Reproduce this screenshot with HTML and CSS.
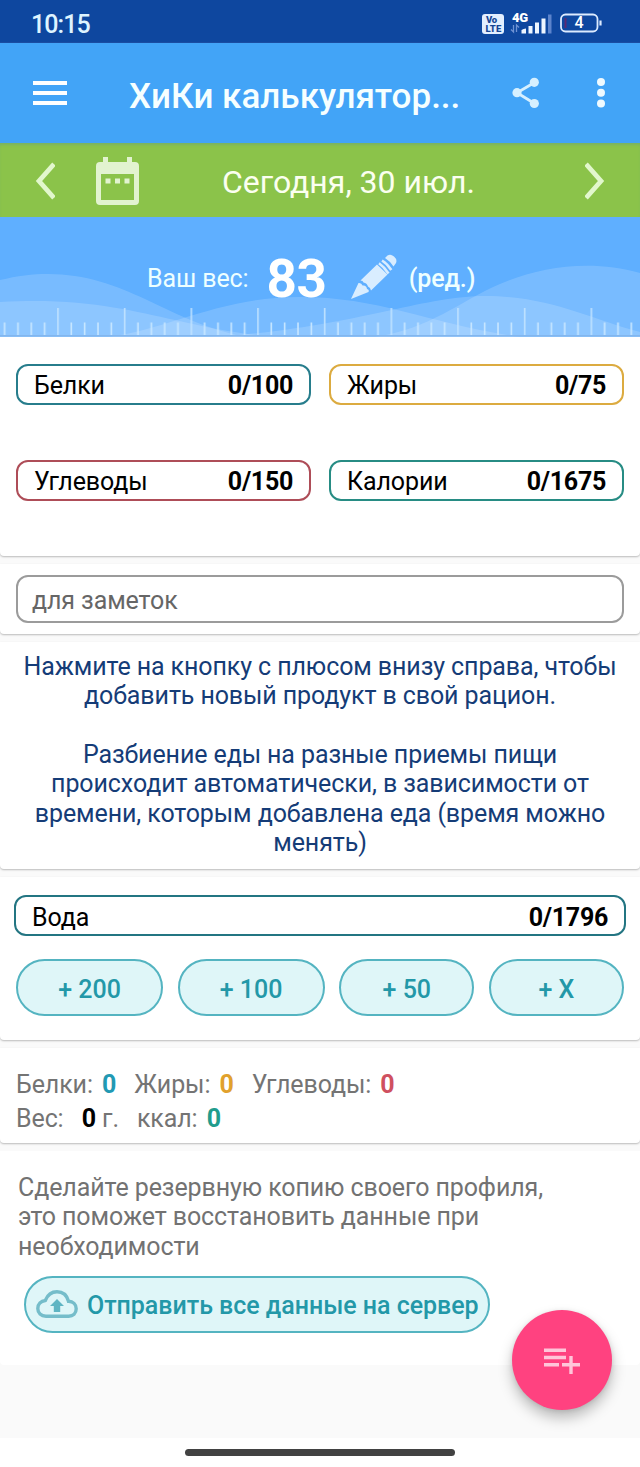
FILE: index.html
```html
<!DOCTYPE html>
<html lang="ru">
<head>
<meta charset="utf-8">
<title>ХиКи калькулятор</title>
<link rel="stylesheet" href="styles.css">
</head>
<body>
<header class="status">
  <span class="clock">10:15</span>
  <svg class="status-icons" width="122" height="26" viewBox="0 0 122 26">
    <rect x="0" y="3" width="22" height="20" rx="3" fill="#e3efff"/>
    <text x="4" y="12.400" class="volte" textLength="11">Vo</text>
    <text x="3.400" y="21" class="volte" textLength="16">LTE</text>
    <text x="30" y="11" class="net" textLength="16">4G</text>
    <path d="M31.500 14v7l-2.500-2.500M34.500 21v-7l2.500 2.500" stroke="#6f93d4" stroke-width="1.300" fill="none"/>
    <path d="M39.500 22.500V19q2-1.500 4.500-1.500v5zM46.500 22.500V15h4v7.500zM53 22.500V11.500h4v11zM59.500 22.500V7.500h4v15z" fill="#eef6ff"/>
    <path d="M66 22.500V3.500h3.500v19z" fill="#5c84cc"/>
    <rect x="79" y="3.500" width="36.500" height="17" rx="4.500" fill="none" stroke="#dcebff" stroke-width="1.800"/>
    <path d="M83.500 7v10" stroke="#5b2a72" stroke-width="2"/>
    <path d="M118.500 9.500v5" stroke="#dcebff" stroke-width="2.200"/>
    <text x="92.500" y="17.300" class="batt">4</text>
  </svg>
</header>
<nav class="toolbar">
  <svg class="menu" width="34" height="24" viewBox="0 0 34 24"><path d="M0 2h34M0 12h34M0 22h34" stroke="#fff" stroke-width="3.800"/></svg>
  <h1 class="title">ХиКи калькулятор...</h1>
  <svg class="share" width="28" height="32" viewBox="0 0 28 32"><path d="M22.500 5.500L5 15.700l17.500 10.800" stroke="#d6f0ff" stroke-width="2.800" fill="none"/><g fill="#d6f0ff"><circle cx="22.300" cy="5.300" r="4.600"/><circle cx="5" cy="15.700" r="4.600"/><circle cx="22.300" cy="26.500" r="4.600"/></g></svg>
  <svg class="dots" width="10" height="32" viewBox="0 0 10 32"><g fill="#effaff"><circle cx="5" cy="5" r="4"/><circle cx="5" cy="15.800" r="4"/><circle cx="5" cy="26.500" r="4"/></g></svg>
</nav>
<section class="daybar">
  <svg class="prev" width="20" height="38" viewBox="0 0 20 38"><path d="M19 2L4 19l15 17" fill="none" stroke="#e2f7cd" stroke-width="4.800"/></svg>
  <svg class="calendar" width="43" height="48" viewBox="0 0 43 48"><path fill="#e2f3d0" fill-rule="evenodd" d="M7 0h5v5h19V0h5v5h3a4 4 0 0 1 4 4v35a4 4 0 0 1-4 4H4a4 4 0 0 1-4-4V9a4 4 0 0 1 4-4h3zM5 17v26h33V17zM9.500 21.500h5v5h-5zm9.500 0h5v5h-5zm9.500 0h5v5h-5z"/></svg>
  <span class="date">Сегодня, 30 июл.</span>
  <svg class="next" width="20" height="38" viewBox="0 0 20 38"><path d="M1 2l15 17L1 36" fill="none" stroke="#e2f7cd" stroke-width="4.800"/></svg>
</section>
<section class="weight">
  <svg class="waves" width="640" height="120" viewBox="0 0 640 120">
    <defs>
      <pattern id="ruler" x="51.200" y="0" width="66.670" height="120" patternUnits="userSpaceOnUse">
        <path d="M6.800 91v27" stroke="#c3e4ff" stroke-width="1.500"/>
        <path d="M20.130 105.500v12.500M33.470 105.500v12.500M46.800 105.500v12.500M60.130 105.500v12.500" stroke="#c9e7ff" stroke-width="1.600"/>
      </pattern>
    </defs>
    <g fill="#fff" fill-opacity=".16">
      <path d="M0 63C60 48 105 63 145 82S205 111 245 120H0z"/>
      <path d="M0 85C80 80 130 93 175 103S250 120 300 120H0z"/>
      <path d="M210 120C350 112 420 79 485 79S590 102 640 115V120z"/>
      <path d="M108 120C170 112 220 80 300 80S430 107 520 120z"/>
      <path d="M375 120C430 112 460 84 500 67S590 42 640 56V120z"/>
    </g>
    <rect width="640" height="120" fill="url(#ruler)"/>
    <path d="M0 118.700h640" stroke="#83b6ed" stroke-width="1.500"/>
  </svg>
  <div class="weight-row">
    <span class="weight-label">Ваш вес:</span>
    <strong class="weight-value">83</strong>
    <svg class="pencil" width="46" height="46" viewBox="0 0 46 46"><g fill="#d9edff"><path d="M0 45L7.500 29q3-.5 4 2.500 4-.5 4.500 3.500 2.500.5 1.500 3z"/><path d="M9.500 26.500L26 10.500l10.500 10-16.500 16q-.5-3-3-4-1-3.500-4.500-4-.5-2-3-2z"/><path d="M34 4L36.500 1.500q3-2 6.500 1t2 6.500L42.500 12.500q-3-5-8.500-8.500z"/></g><path d="M28 9.200q5 3.500 9.500 10.300M31 6.500q5 3 9.300 9.500" stroke="#d9edff" stroke-width="2.600" fill="none"/></svg>
    <span class="edit">(ред.)</span>
  </div>
</section>
<main class="content">
  <section class="card nutrients">
    <div class="field protein"><span>Белки</span><b>0/100</b></div>
    <div class="field fat"><span>Жиры</span><b>0/75</b></div>
    <div class="field carbs"><span>Углеводы</span><b>0/150</b></div>
    <div class="field calories"><span>Калории</span><b>0/1675</b></div>
  </section>
  <section class="card notes"><div class="note-input">для заметок</div></section>
  <section class="card hint">
    <p>Нажмите на кнопку с плюсом внизу справа, чтобы<br>добавить новый продукт в свой рацион.</p>
    <p>Разбиение еды на разные приемы пищи<br>происходит автоматически, в зависимости от<br>времени, которым добавлена еда (время можно<br>менять)</p>
  </section>
  <section class="card water">
    <div class="field water-field"><span>Вода</span><b>0/1796</b></div>
    <div class="pills"><button class="pill">+ 200</button><button class="pill">+ 100</button><button class="pill">+ 50</button><button class="pill">+ X</button></div>
  </section>
  <section class="card totals">
    <div class="line"><span class="item">Белки: <b class="c-protein">0</b></span><span class="item">Жиры: <b class="c-fat">0</b></span><span class="item">Углеводы: <b class="c-carbs">0</b></span></div>
    <div class="line"><span class="item">Вес: <b class="c-weight">0</b> г.</span><span class="item">ккал: <b class="c-kcal">0</b></span></div>
  </section>
  <section class="card backup">
    <p>Сделайте резервную копию своего профиля,<br>это поможет восстановить данные при<br>необходимости</p>
    <button class="pill send">
      <svg width="42" height="28" viewBox="0 0 42 28"><path d="M10 26.200C5 26.200 1.800 23 1.800 18.500c0-4.500 3.200-7.500 7.500-8C11.500 5 15.500 1.800 21 1.800c6 0 10 4 11.500 9.500 4.500.2 7.700 3.200 7.700 7.500 0 4.500-3.200 7.400-7.500 7.400z" fill="none" stroke="#75bdca" stroke-width="3.400"/><path d="M21 9l7 7h-3.800v6h-6.400v-6H14z" fill="#5fb5c3"/></svg>
      <span>Отправить все данные на сервер</span>
    </button>
  </section>
</main>
<footer class="system-nav"><span class="handle"></span></footer>
<button class="fab"><svg width="36" height="26" viewBox="0 0 36 26"><path d="M0 2.200h22M0 9.500h22M0 16.800h15M18 16.800h18M27 8v18" stroke="#ffc5d9" stroke-width="3.400" fill="none"/></svg></button>
</body>
</html>
```
FILE: styles.css
```css
* { box-sizing: border-box; }
body { margin: 0; width: 640px; height: 1467px; display: flex; flex-direction: column; position: relative; overflow: hidden; background: #fafafa; font-family: Roboto, "Noto Sans", sans-serif; font-size: 25px; letter-spacing: -.1px; color: #000; }
h1, p { margin: 0; }
span, b, strong { white-space: nowrap; }
button { font-family: inherit; cursor: pointer; }
svg { flex: none; display: block; letter-spacing: 0; }

.status { height: 43px; flex: none; background: #0e479f; display: flex; justify-content: space-between; padding: 3px 36px 0 31px; border-bottom: 1px solid #1a4da2; }
.clock { color: #def4ff; font-size: 25px; line-height: 44px; font-weight: 500; letter-spacing: -.9px; }
.status-icons { margin-top: 8px; }
.volte { font-size: 9.500px; font-weight: 900; fill: #174794; }
.net { font-size: 13px; font-weight: 900; fill: #fff; }
.batt { font-size: 16px; font-weight: 500; fill: #fff; }

.toolbar { height: 100px; flex: none; background: #42a4f7; display: flex; align-items: center; padding: 0 34px 0 33px; }
.title { width: 334px; margin: 7px 0 0 62px; color: #f6ffff; font-size: 35px; line-height: 44px; font-weight: 500; letter-spacing: 0; white-space: nowrap; }
.share { margin-left: 49px; }
.dots { margin-left: auto; }

.daybar { height: 74px; flex: none; background: #8bc34a; display: flex; align-items: center; padding: 2px 35px 0; box-shadow: inset 0 3px 3px -1px #79b264; }
.calendar { margin-left: 41px; margin-top: -1px; }
.date { margin-left: 83px; margin-top: 1px; color: #fbfff0; font-size: 32px; letter-spacing: 0; }
.next { margin-left: auto; }

.weight { height: 120px; flex: none; background: #5fafff; position: relative; }
.waves { position: absolute; left: 0; top: 0; }
.weight-row { position: relative; display: flex; align-items: center; height: 123px; padding-left: 147px; color: #eeffff; }
.weight-value { margin-left: 18px; color: #fff; font-size: 53px; font-weight: 700; letter-spacing: -.3px; }
.pencil { margin: -4px 0 0 24px; }
.edit { margin-left: 12px; font-weight: 500; }

.content { flex: 1; display: flex; flex-direction: column; gap: 8px; }
.card { background: #fff; border-radius: 0 0 4px 4px; box-shadow: 0 1px 2px rgba(0,0,0,.26); flex: none; }
.field { height: 41px; border: 2px solid; border-radius: 12px; display: flex; align-items: center; justify-content: space-between; padding: 2px 16px 0; }
.field span, .field b { color: #000; }
.field b { font-weight: 700; letter-spacing: -.3px; }
.nutrients { height: 219px; padding: 27px 16px 0; display: grid; grid-template-columns: 1fr 1fr; column-gap: 18px; grid-auto-rows: 41px; row-gap: 55px; }
.protein { border-color: #277d8c; }
.fat { border-color: #dcab40; }
.carbs { border-color: #ae4d58; }
.calories { border-color: #278c84; }
.notes { height: 70px; padding: 11px 16px 0; }
.note-input { height: 48px; border: 2px solid #9b9b9b; border-radius: 12px; padding-left: 14px; line-height: 47px; color: #666; }
.hint { height: 227px; padding: 10px 0 0; display: flex; flex-direction: column; gap: 29px; text-align: center; color: #153c77; line-height: 29.400px; }
.hint p { white-space: nowrap; }
.water { height: 163px; padding: 18px 14px 0; }
.water-field { border-color: #237582; padding-top: 3px; }
.pills { display: grid; grid-template-columns: 147px 147px 135px 135px; justify-content: space-between; padding: 23px 2px 0; }
.pill { height: 57px; border: 2px solid #54b4c1; border-radius: 29px; background: #dff6f8; color: #2398a8; font-size: 25px; font-weight: 500; padding: 4px 0 0; text-align: center; }
.totals { height: 95px; padding: 20px 16px 0; color: #747474; }
.line { height: 34px; line-height: 34px; display: flex; gap: 18px; white-space: pre; }
.c-protein { color: #2299b3; margin-left: 3px; }
.c-fat { color: #e1a12d; margin-left: 3px; }
.c-carbs { color: #cf5060; margin-left: 3px; }
.c-weight { color: #000; margin-left: 12px; }
.c-kcal { color: #219c8c; margin-left: 3px; }
.backup { height: 214px; padding: 22px 18px 0; color: #727272; line-height: 29.300px; box-shadow: none; }
.send { display: flex; align-items: center; width: 466px; margin: 15px 0 0 6px; padding: 0 0 0 10px; }
.send span { margin: 3px 0 0 9px; letter-spacing: -.03px; }
.system-nav { height: 29px; flex: none; background: #fff; display: flex; justify-content: center; padding-top: 11px; }
.handle { width: 270px; height: 7px; border-radius: 4px; background: #424242; }
.fab { position: absolute; left: 512px; top: 1310px; width: 100px; height: 100px; border: 0; border-radius: 50%; background: #ff4280; padding: 0; display: grid; place-items: center; box-shadow: 0 8px 14px rgba(0,0,0,.25), 0 1px 5px rgba(0,0,0,.1); }
.fab svg { margin-top: 2px; }
```
